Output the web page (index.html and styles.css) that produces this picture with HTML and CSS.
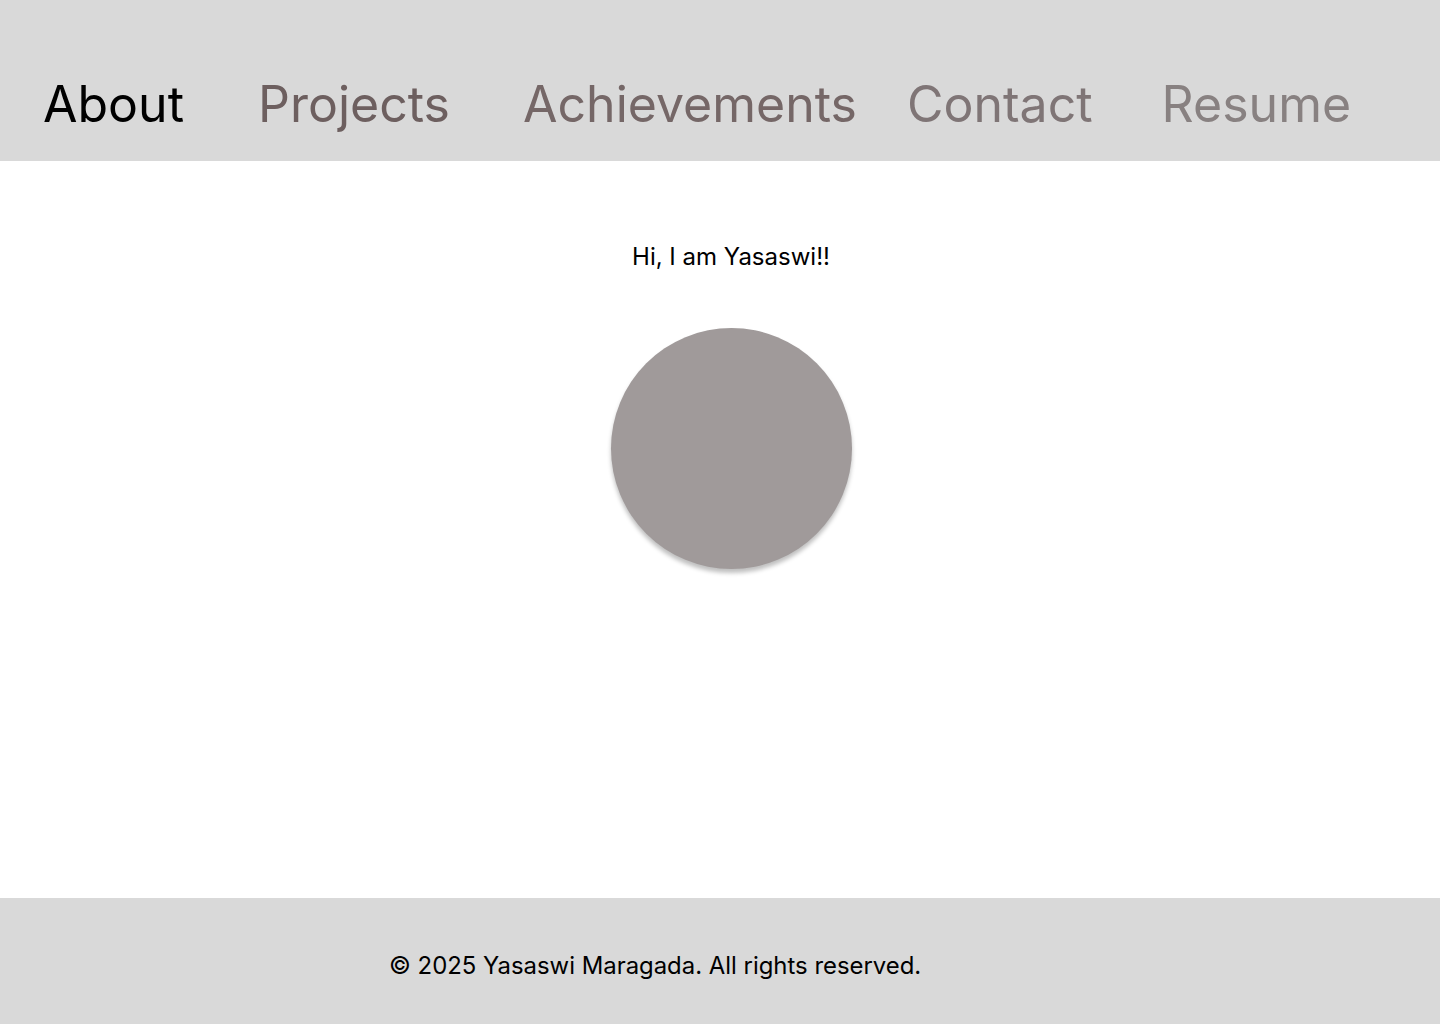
FILE: index.html
```html
<!DOCTYPE html>
<html lang="en">
<head>
<meta charset="utf-8">
<title>Yasaswi Maragada</title>
<link rel="stylesheet" href="styles.css">
</head>
<body>
<header class="header">
  <nav class="nav">
    <a class="nav-link nav-about" href="#">About</a>
    <a class="nav-link nav-projects" href="#">Projects</a>
    <a class="nav-link nav-achievements" href="#">Achievements</a>
    <a class="nav-link nav-contact" href="#">Contact</a>
    <a class="nav-link nav-resume" href="#">Resume</a>
  </nav>
</header>
<main class="main">
  <p class="greeting">Hi, I am Yasaswi!!</p>
  <div class="avatar"></div>
</main>
<footer class="footer">
  <p class="copyright">© 2025 Yasaswi Maragada. All rights reserved.</p>
</footer>
</body>
</html>
```

FILE: styles.css
```css
* { box-sizing: border-box; }
html, body { margin: 0; padding: 0; }
body {
  font-family: Inter, "Noto Sans", sans-serif;
  background: #ffffff;
  color: #000;
  min-height: 1024px;
  display: flex;
  flex-direction: column;
}
.header {
  background: #d9d9d9;
  height: 161px;
  display: flex;
  align-items: flex-end;
}
.nav {
  display: flex;
  align-items: baseline;
  padding: 0 0 27px 43px;
}
.nav-link {
  font-size: 50px;
  line-height: 60px;
  text-decoration: none;
  font-weight: 400;
}
.nav-about { color: #000000; }
.nav-projects { color: #6d5f5f; margin-left: 74px; }
.nav-achievements { color: #756767; margin-left: 73px; }
.nav-contact { color: #7f7576; margin-left: 50px; }
.nav-resume { color: #888181; margin-left: 69px; }
.main {
  flex: 1;
  display: flex;
  flex-direction: column;
  align-items: center;
  padding-top: 78px;
  padding-left: 22px;
}
.greeting {
  margin: 0;
  font-size: 24px;
  line-height: 36px;
}
.avatar {
  margin-top: 53px;
  width: 241px;
  height: 241px;
  border-radius: 50%;
  background: #a09a9a;
  box-shadow: 0 4px 4px rgba(0,0,0,0.25);
}
.footer {
  background: #d9d9d9;
  height: 126px;
  padding-left: 389px;
  padding-top: 51px;
}
.copyright {
  margin: 0;
  font-size: 23.9px;
  line-height: 34px;
}
```
